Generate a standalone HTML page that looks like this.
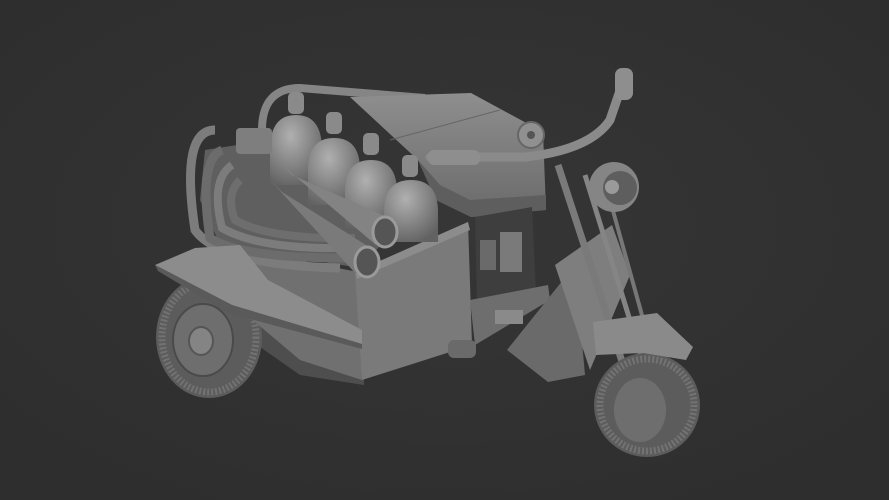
<!DOCTYPE html>
<html><head><style>
html,body{margin:0;padding:0;background:#323232;}
svg{display:block;}
</style></head><body>
<svg width="889" height="500" viewBox="0 0 889 500">
<defs>
<radialGradient id="bg" cx="50%" cy="45%" r="65%"><stop offset="0" stop-color="#363636"/><stop offset="1" stop-color="#2e2e2e"/></radialGradient>
<radialGradient id="tank" cx="40%" cy="30%" r="75%"><stop offset="0" stop-color="#b0b0b0"/><stop offset="1" stop-color="#626262"/></radialGradient>
<linearGradient id="seat" x1="0" y1="0" x2="0" y2="1"><stop offset="0" stop-color="#8e8e8e"/><stop offset="1" stop-color="#6a6a6a"/></linearGradient>
</defs>
<rect width="889" height="500" fill="url(#bg)"/>
<!-- rear underside -->
<polygon points="240,300 364,345 364,385 300,375 250,340" fill="#4e4e4e"/>
<!-- rear wheel -->
<ellipse cx="209" cy="337" rx="53" ry="61" fill="#5c5c5c"/>
<ellipse cx="209" cy="337" rx="47" ry="55" fill="none" stroke="#727272" stroke-width="7" stroke-dasharray="2 2"/>
<ellipse cx="203" cy="340" rx="30" ry="36" fill="#6e6e6e" stroke="#4a4a4a" stroke-width="2"/>
<ellipse cx="201" cy="341" rx="12" ry="14" fill="#848484" stroke="#555" stroke-width="2"/>
<!-- box left face -->
<polygon points="232,247 358,272 362,380 300,360 235,305" fill="#707070"/>
<!-- filler behind pipes -->
<polygon points="205,150 270,140 330,185 390,235 360,268 220,245 200,200" fill="#5f5f5f"/>
<!-- pipes bundle -->
<path d="M215,130 Q180,130 195,230 Q220,265 340,268" fill="none" stroke="#7c7c7c" stroke-width="9"/>
<path d="M222,150 Q198,160 210,238 Q240,258 345,258" fill="none" stroke="#6c6c6c" stroke-width="9"/>
<path d="M232,165 Q210,180 222,228 Q260,250 350,248" fill="none" stroke="#7c7c7c" stroke-width="8"/>
<path d="M240,180 Q225,195 235,220 Q270,240 355,238" fill="none" stroke="#6e6e6e" stroke-width="8"/>
<path d="M262,130 Q262,88 300,88 L425,98" fill="none" stroke="#858585" stroke-width="8"/>
<!-- box front face -->
<polygon points="355,272 468,222 472,345 362,380" fill="#7a7a7a"/>
<polygon points="355,272 468,222 470,230 357,279" fill="#8c8c8c"/>
<!-- fender -->
<polygon points="155,265 195,248 240,245 268,280 362,330 362,344 232,305" fill="#8c8c8c"/>
<polygon points="155,265 232,305 362,344 362,349 228,313 158,271" fill="#5a5a5a"/>
<!-- seat -->
<polygon points="350,97 471,93 543,132 546,210 471,217 436,200 418,160" fill="url(#seat)"/>
<polygon points="418,160 436,200 471,217 546,210 546,195 470,200 440,185" fill="#5e5e5e"/>
<line x1="390" y1="140" x2="500" y2="110" stroke="#666" stroke-width="1"/>
<!-- engine opening -->
<polygon points="475,217 532,207 536,293 477,303" fill="#3e3e3e"/>
<rect x="500" y="232" width="22" height="40" fill="#7a7a7a"/>
<rect x="480" y="240" width="16" height="30" fill="#6a6a6a"/>
<polygon points="470,300 548,285 550,300 475,345" fill="#6e6e6e"/>
<rect x="495" y="310" width="28" height="14" fill="#8a8a8a"/>
<rect x="448" y="340" width="28" height="18" rx="6" fill="#6a6a6a"/>
<!-- right panels -->
<polygon points="507,350 575,265 585,375 548,382" fill="#6a6a6a"/>
<polygon points="555,265 612,225 630,275 590,370" fill="#7e7e7e"/>
<!-- tanks (bottles) -->
<g>
<path d="M270,150 Q270,115 296,115 Q322,115 322,150 L322,185 L270,185 Z" fill="url(#tank)"/>
<path d="M308,170 Q308,138 334,138 Q360,138 360,170 L360,205 L308,205 Z" fill="url(#tank)"/>
<path d="M345,192 Q345,160 371,160 Q397,160 397,192 L397,228 L345,228 Z" fill="url(#tank)"/>
<path d="M384,212 Q384,180 411,180 Q438,180 438,212 L438,242 L384,242 Z" fill="url(#tank)"/>
<rect x="288" y="92" width="16" height="22" rx="5" fill="#8a8a8a"/>
<rect x="326" y="112" width="16" height="22" rx="5" fill="#8a8a8a"/>
<rect x="363" y="133" width="16" height="22" rx="5" fill="#8a8a8a"/>
<rect x="402" y="155" width="16" height="22" rx="5" fill="#8a8a8a"/>
</g>
<!-- mounts -->
<rect x="236" y="128" width="36" height="26" rx="4" fill="#7e7e7e"/>
<!-- exhaust cones -->
<polygon points="282,165 292,175 394,220 376,245" fill="#838383"/>
<ellipse cx="385" cy="232" rx="12" ry="15" fill="#555" stroke="#9a9a9a" stroke-width="3"/>
<polygon points="270,180 282,192 377,252 356,274" fill="#7a7a7a"/>
<ellipse cx="367" cy="262" rx="12" ry="15" fill="#555" stroke="#9a9a9a" stroke-width="3"/>
<!-- fork -->
<line x1="558" y1="165" x2="632" y2="392" stroke="#7a7a7a" stroke-width="7"/>
<line x1="585" y1="175" x2="650" y2="385" stroke="#858585" stroke-width="5"/>
<line x1="610" y1="200" x2="660" y2="380" stroke="#777" stroke-width="4"/>
<!-- front wheel -->
<ellipse cx="647" cy="405" rx="53" ry="52" fill="#5c5c5c"/>
<ellipse cx="647" cy="405" rx="47" ry="46" fill="none" stroke="#737373" stroke-width="7" stroke-dasharray="2 2"/>
<ellipse cx="640" cy="410" rx="26" ry="32" fill="#6e6e6e"/>
<!-- front fender -->
<polygon points="593,322 657,313 693,347 686,360 643,353 596,355" fill="#8a8a8a"/>
<!-- handlebar -->
<path d="M430,157 L525,157 Q590,150 610,120 L626,73" fill="none" stroke="#8a8a8a" stroke-width="9" stroke-linecap="round"/>
<rect x="428" y="150" width="52" height="15" rx="6" fill="#8e8e8e"/>
<rect x="615" y="68" width="18" height="32" rx="7" fill="#8e8e8e"/>
<circle cx="531" cy="135" r="13" fill="#909090" stroke="#666" stroke-width="2"/>
<circle cx="531" cy="135" r="4" fill="#555"/>
<!-- headlight -->
<circle cx="614" cy="187" r="25" fill="#858585"/>
<circle cx="620" cy="188" r="17" fill="#5e5e5e"/>
<circle cx="612" cy="187" r="7" fill="#9a9a9a"/>
</svg>
</body></html>
